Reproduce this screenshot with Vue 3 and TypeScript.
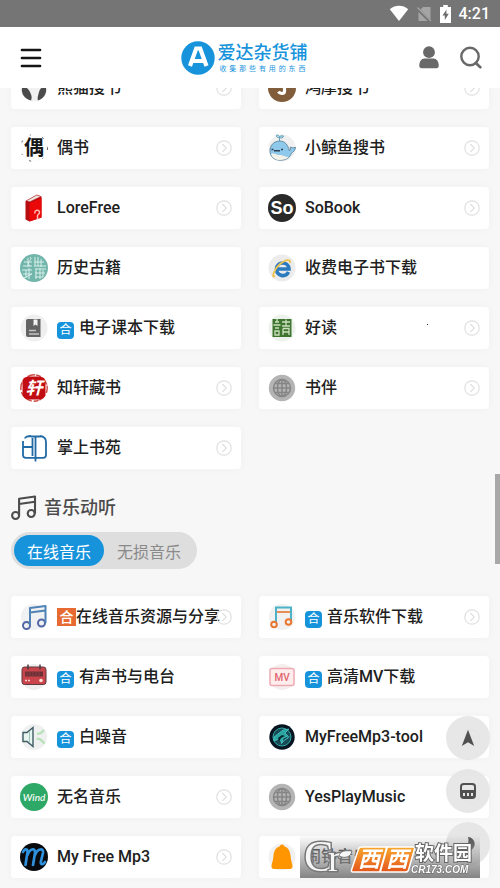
<script setup lang="ts">
import { ref } from 'vue'

interface Site {
  name: string
  icon: string
  badge?: 'blue' | 'orange'
  arrow?: boolean
}

const books: Site[] = [
  { name: '熊猫搜书', icon: 'panda', arrow: true },
  { name: '鸿摩搜书', icon: 'jiumo', arrow: true },
  { name: '偶书', icon: 'ou', arrow: true },
  { name: '小鲸鱼搜书', icon: 'whale', arrow: true },
  { name: 'LoreFree', icon: 'redbook', arrow: true },
  { name: 'SoBook', icon: 'so', arrow: true },
  { name: '历史古籍', icon: 'seal' },
  { name: '收费电子书下载', icon: 'ie' },
  { name: '电子课本下载', icon: 'textbook', badge: 'blue' },
  { name: '好读', icon: 'read', arrow: true },
  { name: '知轩藏书', icon: 'xuan', arrow: true },
  { name: '书伴', icon: 'globe', arrow: true },
  { name: '掌上书苑', icon: 'yin', arrow: true },
]

const music: Site[] = [
  { name: '在线音乐资源与分享', icon: 'note', badge: 'orange', arrow: true },
  { name: '音乐软件下载', icon: 'note2', badge: 'blue', arrow: true },
  { name: '有声书与电台', icon: 'radio', badge: 'blue' },
  { name: '高清MV下载', icon: 'mv', badge: 'blue' },
  { name: '白噪音', icon: 'speaker', badge: 'blue' },
  { name: 'MyFreeMp3-tool', icon: 'neon', arrow: true },
  { name: '无名音乐', icon: 'wind', arrow: true },
  { name: 'YesPlayMusic', icon: 'globe', arrow: true },
  { name: 'My Free Mp3', icon: 'm', arrow: true },
  { name: '闹钟音乐', icon: 'bell', arrow: true },
]

const groups = [
  { id: 'books', sites: books },
  { id: 'music', sites: music },
]
const tabs = ['在线音乐', '无损音乐']
const activeTab = ref(0)
</script>

<template>
  <div class="page">
    <div class="top">
      <div class="status">
        <svg width="20" height="17" viewBox="0 0 20 17"><path d="M.8 4.2C6-.4 14-.4 19.2 4.2L10 16z" fill="#fff" /></svg>
        <svg width="15" height="16" viewBox="0 0 15 16"><path d="M13.500 1v12.500L3.500 3.500 6 1zM1.500 6v9h9z" fill="#a5a5a5" /><path d="M.5 1.500l13.500 13.500" stroke="#a5a5a5" stroke-width="1.300" /></svg>
        <svg width="11" height="18" viewBox="0 0 11 18"><path d="M3.200 0h4.600v2H11v16H0V2h3.200z" fill="#fff" /><path d="M6.500 4.500L2.500 10.500h2.300v4.500l4-6.300H6.300z" fill="#6b6b6b" /></svg>
        <span>4:21</span>
      </div>
      <header class="header">
        <button class="icon-btn" aria-label="菜单">
          <svg width="22" height="20" viewBox="0 0 22 20"><path d="M2 2h18M2 10h18M2 18h18" stroke="#151515" stroke-width="2.700" stroke-linecap="round" /></svg>
        </button>
        <a class="logo" href="#">
          <svg width="34" height="34" viewBox="0 0 34 34">
            <circle cx="17" cy="17" r="16.700" fill="#1793dc" />
            <path d="M9 25L15.200 7.500h4L25.500 25M11.500 20h11" fill="none" stroke="#fff" stroke-width="4.200" />
          </svg>
          <span class="logo-text">
            <strong>爱达杂货铺</strong>
            <small>收集那些有用的东西</small>
          </span>
        </a>
        <div class="actions">
          <button class="icon-btn" aria-label="用户">
            <svg width="22" height="23" viewBox="0 0 22 23"><circle cx="11" cy="6.200" r="5.900" fill="#686868" /><path d="M1.300 19.500c0-4 2.200-7 5-7h9.400c2.800 0 5 3 5 7 0 1.800-.8 2.700-2.300 2.700H3.600c-1.500 0-2.300-.9-2.300-2.700z" fill="#686868" /></svg>
          </button>
          <button class="icon-btn" aria-label="搜索">
            <svg width="22" height="23" viewBox="0 0 22 23"><circle cx="10" cy="10.500" r="8.700" fill="none" stroke="#686868" stroke-width="2.400" /><path d="M15.800 17l4.500 4.200" stroke="#686868" stroke-width="2.700" stroke-linecap="round" /></svg>
          </button>
        </div>
      </header>
    </div>

    <main class="content">
      <template v-for="group in groups" :key="group.id">
        <section v-if="group.id === 'music'" class="heading">
          <h2>
            <svg width="26" height="26" viewBox="0 0 26 26" fill="none" stroke="#4c4c4c" stroke-width="2.100" stroke-linejoin="round"><circle cx="4.600" cy="20.500" r="3.500" /><circle cx="20.200" cy="18.500" r="3.500" /><path d="M8.100 20.500V3.800L24 1.500v17M8.100 9L24 6.800" /></svg>
            音乐动听
          </h2>
          <div class="tabs" role="tablist">
            <button
              v-for="(tab, i) in tabs"
              :key="tab"
              role="tab"
              :aria-selected="activeTab === i"
              :class="{ active: activeTab === i }"
              @click="activeTab = i"
            >{{ tab }}</button>
          </div>
        </section>

        <div class="grid">
          <a v-for="site in group.sites" :key="site.name" class="card" href="#">
            <svg class="site-icon" width="28" height="28" viewBox="0 0 28 28">
              <g v-if="site.icon === 'panda'">
                <circle cx="14" cy="14" r="13.500" fill="#f1f1f1" />
                <path d="M2 14c3-2 6 0 8 4s2 6 1 8.500C5 25 1 20 2 14zM26 14c-3-2-6 0-7 4s-2 6-1 8.500C23 25 27 20 26 14z" fill="#4b4b4b" />
              </g>
              <g v-else-if="site.icon === 'jiumo'">
                <circle cx="14" cy="14" r="14" fill="#825d3c" />
                <path d="M16.500 5v12c0 3-4.500 3.500-6 .5" fill="none" stroke="#fff" stroke-width="3.200" />
              </g>
              <g v-else-if="site.icon === 'ou'">
                <circle cx="14" cy="14" r="13.500" fill="#fdfdfd" stroke="#333" stroke-width=".8" stroke-dasharray="2 9 1 12" />
                <text x="14" y="21" class="ou-glyph">偶</text>
              </g>
              <g v-else-if="site.icon === 'whale'">
                <circle cx="14" cy="14" r="13.500" fill="#f0f0f0" />
                <path d="M2 17c0-6 4-10 10-10 5 0 8 4 9.500 10 1-1 1-3 .8-4l2.700 1 2.500-.8c0 3-2.500 5-4 6-2 5-5.500 7-11.500 7C5.500 26.200 2 22 2 17z" fill="#8ec9ec" stroke="#557b91" stroke-width=".8" />
                <path d="M3 20c4-1.500 5 1.500 8 1s6 2 9.500 2c-2 2.300-5 3-8.500 3-4.500 0-7.500-2-9-6z" fill="#f5f3e8" />
                <path d="M11.500 7V3.500M11.500 3.500C8.500 4 8 2 8.500 1c2-.3 3 1 3 2.500zM11.500 3.500C13 4.500 15.500 4 15.500 2c-2-.6-4 0-4 1.500z" fill="#b7dded" stroke="#5795b1" stroke-width=".9" />
                <path d="M3.500 15.500h2M13 15.500h2M6 16.800h6" stroke="#30404e" stroke-width="1.500" />
              </g>
              <g v-else-if="site.icon === 'redbook'">
                <path d="M5.500 7L17 .8l4.500 1.700v21L9.500 27.500l-4-2z" fill="#b60d10" />
                <path d="M9.500 9L21.500 4v19.500l-12 4z" fill="#ea0808" />
                <path d="M6.500 6.700L16.800 1l4 1.500L9.800 7.800z" fill="#eee2df" stroke="#b33" stroke-width=".5" />
                <path d="M15 19.500c-1-4 4.500-4.500 4.500-1 0 2-2 1.500-2 3.500v3.500" fill="none" stroke="#ffbcb5" stroke-width="1.500" />
              </g>
              <g v-else-if="site.icon === 'so'">
                <circle cx="14" cy="14" r="14" fill="#292929" />
                <text x="14" y="20" class="so-glyph">So</text>
              </g>
              <g v-else-if="site.icon === 'seal'">
                <circle cx="14" cy="14" r="14" fill="#72b5ab" />
                <path d="M4 8h8M3 12h9M8 4v9M10 3c4 3-5 4 0 9M15 3v9M18 3v9M21 5v8M14 8h10M14 12h12M2 16h10M3 20h9M6 16v8M9 14v11M4 24l8-4M15 15h11M15 19h10M16 15v10M20 14v11M23 16v7M15 23h8" fill="none" stroke="#d8efea" stroke-width="1" />
              </g>
              <g v-else-if="site.icon === 'ie'">
                <circle cx="14" cy="14" r="13.500" fill="#ececec" />
                <path d="M20.500 18c-3 6-12 4-12-3 0-8 12-8 12.500 0H9.500" fill="none" stroke="#2d7bbf" stroke-width="3.600" />
                <path d="M7 22C3 25 6 15 12 10s11-5 10-1" fill="none" stroke="#edc34e" stroke-width="1.900" />
              </g>
              <g v-else-if="site.icon === 'textbook'">
                <circle cx="14" cy="14" r="13.500" fill="#efefef" />
                <path d="M8 5h12.500v18H8c-1.300 0-2-1-2-2V7c0-1.300.7-2 2-2z" fill="#636363" />
                <path d="M13.500 5.500h4v6.500l-2-1.500-2 1.500z" fill="#f4f4f4" />
                <path d="M9 16.500h7M9 20h10" stroke="#c4c4c4" stroke-width="1.300" />
              </g>
              <g v-else-if="site.icon === 'read'">
                <circle cx="14" cy="14" r="13.500" fill="#eef2ec" />
                <path d="M4.500 5h19v18h-19z" fill="#3e7531" />
                <path d="M7 8h4M5.500 11h7M7 14h4M7 17h4v4H7zM14 8h8M18 5.500V12M14 12h8M15 14.500h6V21M15 14.500V21M15 18h6M9 5v3" fill="none" stroke="#cce0bd" stroke-width="1.300" />
              </g>
              <g v-else-if="site.icon === 'xuan'">
                <circle cx="14" cy="14" r="13.200" fill="none" stroke="#cc4944" stroke-width="1.400" stroke-dasharray="5 2 8 1" />
                <rect x="2.500" y="2.500" width="23" height="23" rx="6" fill="#c20e12" />
                <text x="14" y="20" class="xuan-glyph">轩</text>
              </g>
              <g v-else-if="site.icon === 'globe'">
                <circle cx="14" cy="14" r="13.200" fill="#b4b4b4" />
                <g fill="none" stroke="#858585" stroke-width="1.500"><circle cx="14" cy="14" r="8.500" /><ellipse cx="14" cy="14" rx="4.500" ry="8.500" /><path d="M5.500 14h17M14 5.500v17M7.500 9.500h13M7.500 18.500h13" /></g>
              </g>
              <g v-else-if="site.icon === 'yin'" fill="none" stroke="#216aa5" stroke-width="1.800">
                <path d="M11 2C8 2 5 3 5 4.500M12.500 4v18M3 7v14c0 2 1 2.800 3 2.800h17c2 0 3-.8 3-2.800V8c0-3-2-5.500-6-6M15.500 2v25.500M3 13h9.500M11 2.500h10" />
              </g>
              <g v-else-if="site.icon === 'note'" fill="none" stroke="#4f83b6" stroke-width="2" stroke-linejoin="round">
                <circle cx="14" cy="14" r="13" fill="#f0f1f2" stroke="none" />
                <circle cx="6.500" cy="22.500" r="3.500" stroke="#5267a5" /><circle cx="21.500" cy="20" r="3.500" stroke="#5267a5" />
                <path d="M10 22V5l15.500-2v17M10 9.500l15.500-2" />
              </g>
              <g v-else-if="site.icon === 'note2'" fill="none" stroke-width="2">
                <circle cx="14" cy="14" r="13" fill="#f1f1f1" />
                <path d="M8 20V4.500h15V18" stroke="#4bb2c8" /><path d="M9 9h13" stroke="#e77731" stroke-width="1.600" />
                <circle cx="6" cy="21.500" r="2.800" stroke="#e77731" /><circle cx="20.500" cy="19" r="2.800" stroke="#e77731" />
              </g>
              <g v-else-if="site.icon === 'radio'">
                <circle cx="14" cy="14" r="13" fill="#eee" />
                <rect x="2" y="4" width="24" height="17.500" rx="2.500" fill="#c9454b" stroke="#5f3a42" />
                <path d="M8 1.500v5M20 1.500v5" stroke="#4c3b40" stroke-width="1.500" />
                <path d="M5 8.500h18v5H5z" fill="#6d3037" />
                <path d="M7 9v4M10 9v4M13 9v4M16 9v4M19 9v4" stroke="#8d3a42" stroke-width="1" />
                <path d="M5 17.500h6" stroke="#ffd1cb" stroke-width="1.700" stroke-dasharray="2 1" /><circle cx="21" cy="17.500" r="1.800" fill="#ffe0da" />
              </g>
              <g v-else-if="site.icon === 'mv'">
                <circle cx="14" cy="14" r="13" fill="#f4eeee" />
                <rect x="2" y="5.500" width="24" height="17" rx="2" fill="#ffeded" stroke="#ecabb2" stroke-width="1.500" />
                <text x="14" y="18" class="mv-glyph">MV</text>
              </g>
              <g v-else-if="site.icon === 'speaker'">
                <circle cx="14" cy="14" r="13" fill="#eef1ef" />
                <path d="M3 9.500h4l6-5v19l-6-5H3z" fill="#e8f4f0" stroke="#405b65" stroke-width="1.400" />
                <path d="M9.500 8v12" stroke="#9ec5bc" />
                <path d="M17 11l4-1 3-3M16.500 15.500l4 1 4 4" fill="none" stroke="#b5dfb5" stroke-width="2.200" />
              </g>
              <g v-else-if="site.icon === 'neon'">
                <circle cx="14" cy="14" r="12.700" fill="#071421" />
                <circle cx="14" cy="14" r="9" fill="#174a55" stroke="#31aaa5" />
                <path d="M6 14l9-7 6-1-4 4 3 3-5 2-1 5-3-4-5 2zM13 21c4-6 7-4 8-8" fill="#28a69f" stroke="#50ced0" stroke-width=".7" />
                <path d="M10 15l4-3 3 1-4 2-2 4z" fill="#082430" />
              </g>
              <g v-else-if="site.icon === 'wind'">
                <circle cx="14" cy="14" r="14" fill="#2ea866" />
                <text x="14" y="18" class="wind-glyph">Wind</text>
              </g>
              <g v-else-if="site.icon === 'm'">
                <circle cx="14" cy="14" r="14" fill="#080a0d" />
                <path d="M3 9c2-4 5-3 4.500 0L5.500 22M7.500 12c2-6 8-8 7.500-2l-2 12M15 12c2-6 9-8 8-2l-2 8c-1 4 2 4 4 1" fill="none" stroke="#2f91dc" stroke-width="2.700" stroke-linecap="round" />
              </g>
              <g v-else>
                <circle cx="14" cy="14" r="13.500" fill="#f1f1f1" />
                <path d="M14 1.500c1.500 0 2 1 2.500 2 4 1.200 5.500 4.500 6 9 .4 4.500 1.500 8 2 10 .4 2-.8 3.500-2.500 3.500H6c-1.700 0-2.900-1.500-2.500-3.500.5-2 1.600-5.500 2-10 .5-4.500 2-7.800 6-9 .5-1 1-2 2.500-2z" fill="#ff9500" />
              </g>
            </svg>
            <span class="name">
              <i v-if="site.badge" :class="['badge', site.badge]">合</i>
              <span>{{ site.name }}</span>
            </span>
            <svg v-if="site.arrow" class="arrow" width="16" height="16" viewBox="0 0 16 16" fill="none" stroke="#e0e0e0" stroke-width="1.200"><circle cx="8" cy="8" r="7.200" /><path d="M6.300 4l4 4-4 4" /></svg>
          </a>
        </div>
      </template>
      <i class="speck"></i>
    </main>

    <div class="fabs">
      <button aria-label="返回顶部"><svg width="14" height="18" viewBox="0 0 14 18"><path d="M7 .8L13.200 17 7 13.200.8 17z" fill="#505050" /></svg></button>
      <button aria-label="导航"><svg width="16" height="16" viewBox="0 0 16 16"><path fill-rule="evenodd" d="M4 0h8c3 0 4 1.200 4 4v8c0 2.800-1 4-4 4H4c-3 0-4-1.200-4-4V4c0-2.800 1-4 4-4zM2 4v3h12V4c0-1.300-.6-2-2-2H4c-1.400 0-2 .7-2 2zm1 6v3h2v-3zm4 0v3h2v-3zm4 0v3h2v-3z" fill="#505050" /></svg></button>
      <button aria-label="夜间模式"><svg width="18" height="18" viewBox="0 0 18 18"><path d="M9 2a7 7 0 1 1-7 9c5 2 9-3 7-9z" fill="#505050" /></svg></button>
    </div>
    <div class="scrollbar"></div>

    <div class="mark">
      <svg width="180" height="43" viewBox="0 0 180 43">
        <defs>
          <linearGradient id="tile" x1="0" y1="0" x2="0" y2="1"><stop offset="0" stop-color="#f7a72d" /><stop offset="1" stop-color="#e4561c" /></linearGradient>
        </defs>
        <text x="4" y="36" class="mark-letter">C</text>
        <text x="28" y="36" class="mark-letter small">r</text>
        <path d="M39 21c1-5 6-6 13-5-1 6-7 8-13 5z" fill="#f6f6f6" stroke="#777" />
        <path d="M62 12h51q2 0 1.500 2l-6 21q-.5 2-3 2H53q-2 0-1.500-2l7-21q.7-2 3.500-2z" fill="url(#tile)" stroke="#fff" stroke-width="1.500" />
        <path d="M87 12l-7 25" stroke="#fff" stroke-width="2" />
        <g class="tile-text"><text x="58" y="32">西</text><text x="86" y="32">西</text></g>
        <text x="115" y="25" class="mark-title">软件园</text>
        <text x="111" y="38" class="mark-domain">CR173.COM</text>
      </svg>
    </div>
  </div>
</template>

<style>
body {
  background: #f7f7f7;
}
</style>

<style scoped>
.page {
  position: relative;
  min-height: 100vh;
  overflow: hidden;
  box-sizing: border-box;
  font-family: Roboto, "Noto Sans CJK SC", sans-serif;
  background: #f7f7f7;
  color: #202020;
}
button {
  border: 0;
  padding: 0;
  background: none;
  font: inherit;
  cursor: pointer;
}
svg {
  display: block;
  flex: none;
}
a {
  color: inherit;
  text-decoration: none;
}
.top {
  position: relative;
  z-index: 2;
  background: #fff;
}
.status {
  display: flex;
  align-items: center;
  justify-content: flex-end;
  gap: 8px;
  height: 27px;
  padding-right: 10px;
  background: #757575;
  color: #fff;
  font-size: 16px;
  font-weight: 500;
}
.header {
  display: grid;
  grid-template-columns: 1fr auto 1fr;
  align-items: center;
  height: 61px;
  padding: 0 18px 0 20px;
}
.icon-btn {
  justify-self: start;
}
.logo {
  display: flex;
  align-items: center;
  gap: 3px;
  margin-right: 14px;
  color: #1793dc;
}
.logo-text {
  display: flex;
  flex-direction: column;
}
.logo-text strong {
  font-size: 18px;
  font-weight: 500;
  line-height: 22px;
}
.logo-text small {
  font-size: 7px;
  line-height: 10px;
  padding: 0 2px;
  text-align: justify;
  text-align-last: justify;
}
.actions {
  display: flex;
  justify-content: flex-end;
  gap: 20px;
}
.content {
  position: relative;
  margin-top: -21px;
  padding: 0 11px 10px;
}
.grid {
  display: grid;
  grid-template-columns: 1fr 1fr;
  gap: 18px;
}
.card {
  display: flex;
  align-items: center;
  box-sizing: border-box;
  height: 42px;
  min-width: 0;
  padding: 0 9px;
  border-radius: 4px;
  background: #fff;
  box-shadow: 0 0 10px rgba(0, 0, 0, 0.03);
}
.name {
  display: flex;
  align-items: flex-end;
  flex: 1;
  min-width: 0;
  margin-left: 9px;
  font-size: 16px;
  font-weight: 500;
  line-height: 22px;
  white-space: nowrap;
}
.badge {
  flex: none;
  font-style: normal;
  text-align: center;
  color: #fff;
}
.badge.blue {
  width: 17px;
  height: 17px;
  margin-right: 5px;
  border-radius: 4px;
  background: #1793dc;
  font-size: 12px;
  font-weight: 400;
  line-height: 17px;
}
.badge.orange {
  align-self: center;
  width: 19px;
  height: 18px;
  background: #e66a31;
  font-size: 14px;
  line-height: 18px;
}
.heading {
  padding: 26px 0 27px;
}
h2 {
  display: flex;
  align-items: center;
  gap: 7px;
  margin: 0 0 11px;
  font-size: 18px;
  font-weight: 500;
  line-height: 26px;
  color: #4c4c4c;
}
.tabs {
  display: inline-flex;
  vertical-align: top;
  padding: 3px;
  border-radius: 20px;
  background: #dedede;
}
.tabs button {
  height: 31px;
  padding: 0 13px;
  border-radius: 16px;
  font-size: 16px;
  color: #8a8a8a;
}
.tabs button.active {
  background: #1793dc;
  color: #fff;
}
.ou-glyph {
  font: 700 20px "Noto Sans CJK SC", sans-serif;
  text-anchor: middle;
  fill: #171717;
}
.so-glyph {
  font: 700 18px "Liberation Sans", sans-serif;
  text-anchor: middle;
  fill: #fff;
}
.xuan-glyph {
  font: italic 700 17px "Noto Sans CJK SC", sans-serif;
  text-anchor: middle;
  fill: #fff;
}
.mv-glyph {
  font: 500 10px Roboto, sans-serif;
  text-anchor: middle;
  fill: #e1636e;
}
.wind-glyph {
  font: italic 500 10px Lato, sans-serif;
  text-anchor: middle;
  fill: #fff;
}
.speck {
  position: absolute;
  left: 427px;
  top: 257px;
  width: 1px;
  height: 1px;
  background: #222;
}
.fabs {
  position: fixed;
  right: 10px;
  bottom: 22px;
  z-index: 3;
  display: flex;
  flex-direction: column;
  gap: 9px;
}
.fabs button {
  display: grid;
  place-items: center;
  width: 44px;
  height: 44px;
  border-radius: 50%;
  background: rgba(228, 228, 228, 0.88);
}
.scrollbar {
  position: fixed;
  top: 474px;
  right: 0;
  z-index: 3;
  width: 5px;
  height: 90px;
  background: #a8a8a8;
}
.mark {
  position: fixed;
  right: 20px;
  bottom: 10px;
  z-index: 4;
  background: linear-gradient(rgba(255, 255, 255, 0), rgba(160, 160, 160, 0.6) 45%, rgba(125, 125, 125, 0.95));
}
.mark-letter {
  font: 44px "Liberation Serif", serif;
  fill: #f6f6f6;
  stroke: #777;
  stroke-width: 3px;
  paint-order: stroke;
}
.mark-letter.small {
  font-size: 38px;
}
.tile-text {
  font: italic 700 22px "Noto Sans CJK SC", sans-serif;
  fill: #fff;
}
.mark-title {
  font: 700 19px "Noto Sans CJK SC", sans-serif;
  fill: #fff;
  stroke: #666;
  stroke-width: 2px;
  paint-order: stroke;
}
.mark-domain {
  font: italic 700 10px "Liberation Sans", sans-serif;
  fill: #fff;
  stroke: #666;
  stroke-width: 1px;
  paint-order: stroke;
}
</style>
